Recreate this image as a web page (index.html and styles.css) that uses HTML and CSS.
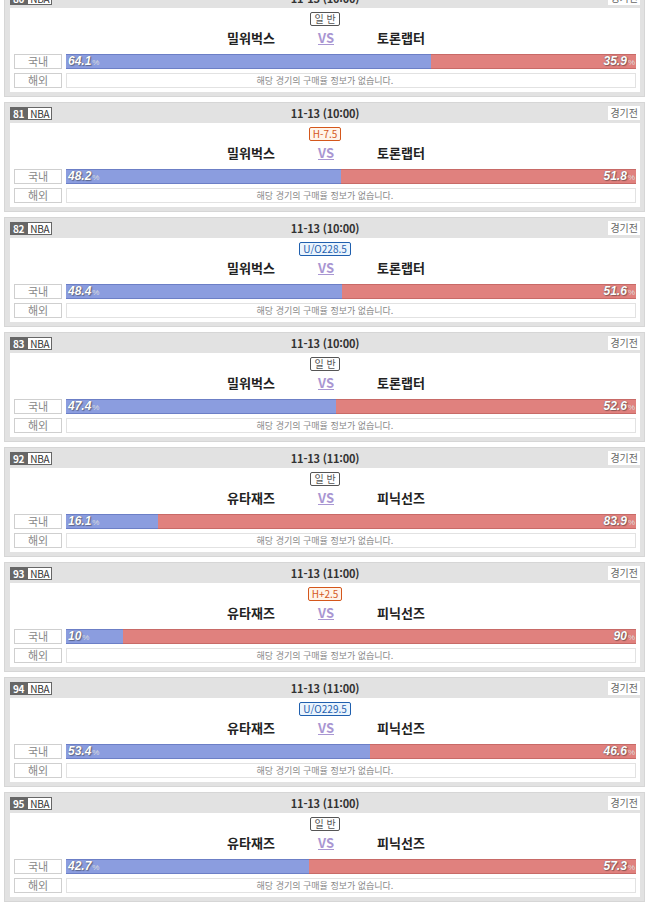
FILE: index.html
```html
<!DOCTYPE html>
<html lang="ko">
<head>
<meta charset="utf-8">
<link rel="stylesheet" href="styles.css">
</head>
<body>
<div class="list">

  <div class="card">
    <div class="head"><div class="league"><span class="num">80</span><span class="lg">NBA</span></div><div class="date">11-13 (10:00)</div><div class="state">경기전</div></div>
    <div class="body">
      <div class="type"><span class="tag normal">일 반</span></div>
      <div class="teams"><span class="team">밀워벅스</span><span class="vs">VS</span><span class="team">토론랩터</span></div>
      <div class="row"><span class="label">국내</span><div class="bar"><div class="home" style="width:64.1%"><span class="pct">64.1<small>%</small></span></div><div class="away"><span class="pct">35.9<small>%</small></span></div></div></div>
      <div class="row"><span class="label">해외</span><div class="empty">해당 경기의 구매율 정보가 없습니다.</div></div>
    </div>
  </div>

  <div class="card">
    <div class="head"><div class="league"><span class="num">81</span><span class="lg">NBA</span></div><div class="date">11-13 (10:00)</div><div class="state">경기전</div></div>
    <div class="body">
      <div class="type"><span class="tag hc">H-7.5</span></div>
      <div class="teams"><span class="team">밀워벅스</span><span class="vs">VS</span><span class="team">토론랩터</span></div>
      <div class="row"><span class="label">국내</span><div class="bar"><div class="home" style="width:48.2%"><span class="pct">48.2<small>%</small></span></div><div class="away"><span class="pct">51.8<small>%</small></span></div></div></div>
      <div class="row"><span class="label">해외</span><div class="empty">해당 경기의 구매율 정보가 없습니다.</div></div>
    </div>
  </div>

  <div class="card">
    <div class="head"><div class="league"><span class="num">82</span><span class="lg">NBA</span></div><div class="date">11-13 (10:00)</div><div class="state">경기전</div></div>
    <div class="body">
      <div class="type"><span class="tag uo">U/O228.5</span></div>
      <div class="teams"><span class="team">밀워벅스</span><span class="vs">VS</span><span class="team">토론랩터</span></div>
      <div class="row"><span class="label">국내</span><div class="bar"><div class="home" style="width:48.4%"><span class="pct">48.4<small>%</small></span></div><div class="away"><span class="pct">51.6<small>%</small></span></div></div></div>
      <div class="row"><span class="label">해외</span><div class="empty">해당 경기의 구매율 정보가 없습니다.</div></div>
    </div>
  </div>

  <div class="card">
    <div class="head"><div class="league"><span class="num">83</span><span class="lg">NBA</span></div><div class="date">11-13 (10:00)</div><div class="state">경기전</div></div>
    <div class="body">
      <div class="type"><span class="tag normal">일 반</span></div>
      <div class="teams"><span class="team">밀워벅스</span><span class="vs">VS</span><span class="team">토론랩터</span></div>
      <div class="row"><span class="label">국내</span><div class="bar"><div class="home" style="width:47.4%"><span class="pct">47.4<small>%</small></span></div><div class="away"><span class="pct">52.6<small>%</small></span></div></div></div>
      <div class="row"><span class="label">해외</span><div class="empty">해당 경기의 구매율 정보가 없습니다.</div></div>
    </div>
  </div>

  <div class="card">
    <div class="head"><div class="league"><span class="num">92</span><span class="lg">NBA</span></div><div class="date">11-13 (11:00)</div><div class="state">경기전</div></div>
    <div class="body">
      <div class="type"><span class="tag normal">일 반</span></div>
      <div class="teams"><span class="team">유타재즈</span><span class="vs">VS</span><span class="team">피닉선즈</span></div>
      <div class="row"><span class="label">국내</span><div class="bar"><div class="home" style="width:16.1%"><span class="pct">16.1<small>%</small></span></div><div class="away"><span class="pct">83.9<small>%</small></span></div></div></div>
      <div class="row"><span class="label">해외</span><div class="empty">해당 경기의 구매율 정보가 없습니다.</div></div>
    </div>
  </div>

  <div class="card">
    <div class="head"><div class="league"><span class="num">93</span><span class="lg">NBA</span></div><div class="date">11-13 (11:00)</div><div class="state">경기전</div></div>
    <div class="body">
      <div class="type"><span class="tag hc">H+2.5</span></div>
      <div class="teams"><span class="team">유타재즈</span><span class="vs">VS</span><span class="team">피닉선즈</span></div>
      <div class="row"><span class="label">국내</span><div class="bar"><div class="home" style="width:10%"><span class="pct">10<small>%</small></span></div><div class="away"><span class="pct">90<small>%</small></span></div></div></div>
      <div class="row"><span class="label">해외</span><div class="empty">해당 경기의 구매율 정보가 없습니다.</div></div>
    </div>
  </div>

  <div class="card">
    <div class="head"><div class="league"><span class="num">94</span><span class="lg">NBA</span></div><div class="date">11-13 (11:00)</div><div class="state">경기전</div></div>
    <div class="body">
      <div class="type"><span class="tag uo">U/O229.5</span></div>
      <div class="teams"><span class="team">유타재즈</span><span class="vs">VS</span><span class="team">피닉선즈</span></div>
      <div class="row"><span class="label">국내</span><div class="bar"><div class="home" style="width:53.4%"><span class="pct">53.4<small>%</small></span></div><div class="away"><span class="pct">46.6<small>%</small></span></div></div></div>
      <div class="row"><span class="label">해외</span><div class="empty">해당 경기의 구매율 정보가 없습니다.</div></div>
    </div>
  </div>

  <div class="card">
    <div class="head"><div class="league"><span class="num">95</span><span class="lg">NBA</span></div><div class="date">11-13 (11:00)</div><div class="state">경기전</div></div>
    <div class="body">
      <div class="type"><span class="tag normal">일 반</span></div>
      <div class="teams"><span class="team">유타재즈</span><span class="vs">VS</span><span class="team">피닉선즈</span></div>
      <div class="row"><span class="label">국내</span><div class="bar"><div class="home" style="width:42.7%"><span class="pct">42.7<small>%</small></span></div><div class="away"><span class="pct">57.3<small>%</small></span></div></div></div>
      <div class="row"><span class="label">해외</span><div class="empty">해당 경기의 구매율 정보가 없습니다.</div></div>
    </div>
  </div>

</div>
</body>
</html>
```

FILE: styles.css
```css
html, body {
  margin: 0;
  padding: 0;
  background: #fff;
}
body {
  font-family: "Noto Sans CJK KR", "Noto Sans", sans-serif;
  color: #333;
  overflow: hidden;
}
.list {
  display: flex;
  flex-direction: column;
  gap: 5px;
  padding: 0 5px 0 4px;
  margin-top: -13px;
}
.card {
  height: 110px;
  flex-shrink: 0;
  box-sizing: border-box;
  background: #e2e2e2;
  border: 1px solid #d6d6d6;
  padding: 0 4px 4px 5px;
  display: flex;
  flex-direction: column;
}
.head {
  height: 20px;
  flex-shrink: 0;
  display: grid;
  grid-template-columns: 1fr auto 1fr;
  align-items: center;
}
.league {
  display: flex;
  align-items: center;
  height: 13px;
}
.num {
  background: #666;
  color: #fff;
  font-size: 10px;
  font-weight: 700;
  line-height: 13px;
  height: 13px;
  padding: 0 3px;
  letter-spacing: -0.3px;
}
.lg {
  background: #fff;
  color: #333;
  border: 1px solid #666;
  font-size: 10px;
  line-height: 11px;
  height: 11px;
  padding: 0 2px;
  letter-spacing: -0.3px;
}
.date {
  font-size: 11px;
  font-weight: 700;
  color: #333;
  line-height: 20px;
  letter-spacing: -0.2px;
}
.state {
  justify-self: end;
  background: #fff;
  color: #666;
  font-size: 10px;
  line-height: 14px;
  padding: 0 2px;
}
.body {
  background: #fff;
  height: 84px;
  flex-shrink: 0;
  box-sizing: border-box;
  padding: 4px 4px 0 4px;
  display: flex;
  flex-direction: column;
}
.body > * {
  flex-shrink: 0;
}
.type {
  height: 14px;
  display: flex;
  justify-content: center;
}
.tag {
  font-size: 10px;
  line-height: 12px;
  height: 12px;
  padding: 0 3px;
  border: 1px solid #555;
  border-radius: 2px;
  color: #555;
  background: #fff;
}
.tag.hc {
  border-color: #d4571c;
  color: #d4571c;
  background: #fff4ea;
}
.tag.uo {
  border-color: #1f5fae;
  color: #1f5fae;
  background: #eaf4fd;
}
.teams {
  height: 23px;
  display: flex;
  justify-content: center;
  align-items: center;
  margin-bottom: 5px;
  margin-left: 2px;
}
.team {
  width: 100px;
  text-align: center;
  font-size: 13px;
  font-weight: 700;
  color: #222;
}
.vs {
  width: 50px;
  text-align: center;
  font-size: 13px;
  font-weight: 700;
  color: #a996d2;
  text-decoration: underline;
}
.row {
  display: flex;
  gap: 4px;
  height: 15px;
  margin-bottom: 4px;
}
.label {
  width: 48px;
  box-sizing: border-box;
  border: 1px solid #cfcfcf;
  text-align: center;
  font-size: 11px;
  line-height: 13px;
  color: #888;
}
.bar {
  flex: 1;
  display: flex;
  height: 15px;
}
.home, .away {
  box-sizing: border-box;
  height: 15px;
  display: flex;
  align-items: center;
}
.home {
  background: #8b9ddf;
  border-top: 1px solid #6c7fc6;
  border-bottom: 1px solid #6c7fc6;
  padding-left: 2px;
}
.away {
  flex: 1;
  background: #e0817e;
  border-top: 1px solid #c86a67;
  border-bottom: 1px solid #c86a67;
  justify-content: flex-end;
  padding-right: 1px;
}
.pct {
  color: #fff;
  font-family: "Liberation Sans", Arial, sans-serif;
  font-weight: 700;
  font-style: italic;
  font-size: 12px;
  line-height: 13px;
  text-shadow: 0 0 1px #555, 1px 1px 1px rgba(0,0,0,0.35);
  white-space: nowrap;
}
.pct small {
  font-size: 8px;
  font-style: normal;
  font-weight: 400;
  color: #ddd;
  text-shadow: none;
  margin-left: 1px;
}
.empty {
  flex: 1;
  box-sizing: border-box;
  border: 1px solid #e2e2e2;
  padding-right: 52px;
  text-align: center;
  font-size: 9px;
  line-height: 13px;
  color: #888;
}
```
